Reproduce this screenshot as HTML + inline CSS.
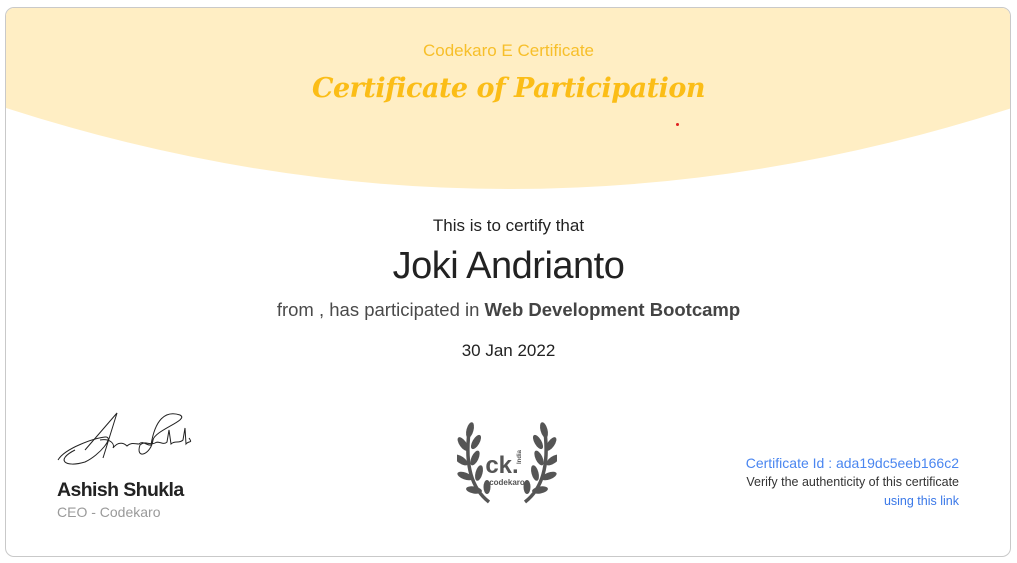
<!DOCTYPE html>
<html><head><meta charset="utf-8"><style>
*{margin:0;padding:0;box-sizing:border-box}
body{width:1017px;height:563px;background:#fff;font-family:"Liberation Sans",sans-serif;position:relative;overflow:hidden}
.card{position:absolute;left:5px;top:7px;width:1006px;height:550px;border:1px solid #c9c9c9;border-radius:9px;overflow:hidden;background:#fff}
.t{position:absolute;left:0;width:1017px;text-align:center;white-space:nowrap}
</style></head><body>
<div class="card">
<svg width="1006" height="550" style="position:absolute;left:0;top:0">
<path d="M0 0 H1006 V100 Q503 262 0 100 Z" fill="#ffeec4"/>
</svg>
</div>
<div class="t" style="top:41px;font-size:17px;color:#f7bf2a">Codekaro E Certificate</div>
<div class="t" style="top:73px;font-size:27px;color:#fbbd17;font-family:'DejaVu Serif',serif;font-style:italic;font-weight:bold;letter-spacing:-0.5px">Certificate of Participation</div>
<div style="position:absolute;left:676px;top:123px;width:3px;height:3px;border-radius:50%;background:#e02020"></div>
<div class="t" style="top:216px;font-size:17px;color:#222">This is to certify that</div>
<div class="t" style="top:245px;font-size:38px;color:#222;letter-spacing:-0.5px">Joki Andrianto</div>
<div class="t" style="top:299px;font-size:18.5px;color:#4a4a4a">from , has participated in <b style="color:#444">Web Development Bootcamp</b></div>
<div class="t" style="top:341px;font-size:17px;color:#222">30 Jan 2022</div>
<svg width="140" height="60" style="position:absolute;left:55px;top:410px" fill="none" stroke="#222" stroke-width="1">
<path d="M3 50 C10 38 40 28 50 27 C60 26 45 45 30 52 C10 58 0 50 20 40"/>
<path d="M30 40 L62 3 L48 48"/>
<path d="M45 30 C55 28 60 34 58 38 C64 30 70 34 72 36 C76 32 80 34 84 34 C88 30 92 36 96 35"/>
<path d="M96 35 C100 10 110 0 125 5 C135 10 100 20 98 30 C96 45 80 50 85 35 C90 30 95 36 100 33 C104 30 108 36 112 32 L114 20 L116 34 C120 30 124 34 128 30 L130 18 L131 34 C134 30 138 34 134 28"/>
</svg>
<div style="position:absolute;left:57px;top:479px;font-size:19.5px;font-weight:bold;color:#222;letter-spacing:-0.6px">Ashish Shukla</div>
<div style="position:absolute;left:57px;top:504px;font-size:14px;color:#9a9a9a">CEO - Codekaro</div>
<svg width="100" height="90" style="position:absolute;left:457px;top:420px">
<g fill="#555">
<g id="l">
<path d="M32 82 Q6 62 12 12" stroke="#555" stroke-width="3.5" fill="none"/>
<ellipse cx="13" cy="10" rx="3.5" ry="8" transform="rotate(15 13 10)"/>
<ellipse cx="6" cy="24" rx="3.5" ry="8" transform="rotate(-35 6 24)"/>
<ellipse cx="19" cy="22" rx="3.5" ry="8" transform="rotate(30 19 22)"/>
<ellipse cx="4" cy="40" rx="3.5" ry="8" transform="rotate(-55 4 40)"/>
<ellipse cx="18" cy="38" rx="3.5" ry="8" transform="rotate(25 18 38)"/>
<ellipse cx="8" cy="56" rx="3.5" ry="8" transform="rotate(-70 8 56)"/>
<ellipse cx="22" cy="53" rx="3.5" ry="8" transform="rotate(15 22 53)"/>
<ellipse cx="17" cy="70" rx="3.5" ry="8" transform="rotate(-80 17 70)"/>
<ellipse cx="30" cy="67" rx="3.5" ry="7" transform="rotate(0 30 67)"/>
</g>
<use href="#l" transform="translate(100 0) scale(-1 1)"/>
<text x="45" y="53" font-size="24" font-weight="bold" text-anchor="middle" font-family="Liberation Sans">ck.</text>
<text x="50" y="65" font-size="8" font-weight="bold" text-anchor="middle" font-family="Liberation Sans">codekaro</text>
<text x="64" y="44" font-size="6" font-weight="bold" transform="rotate(-90 64 44)" font-family="Liberation Sans">India</text>
</g>
</svg>
<div style="position:absolute;right:58px;top:455px;font-size:14px;color:#4a86f0;text-align:right;white-space:nowrap">Certificate Id : ada19dc5eeb166c2</div>
<div style="position:absolute;right:58px;top:475px;font-size:12.5px;color:#333;text-align:right;white-space:nowrap">Verify the authenticity of this certificate</div>
<div style="position:absolute;right:58px;top:494px;font-size:12.5px;color:#3a78e8;text-align:right;white-space:nowrap">using this link</div>
</body></html>
